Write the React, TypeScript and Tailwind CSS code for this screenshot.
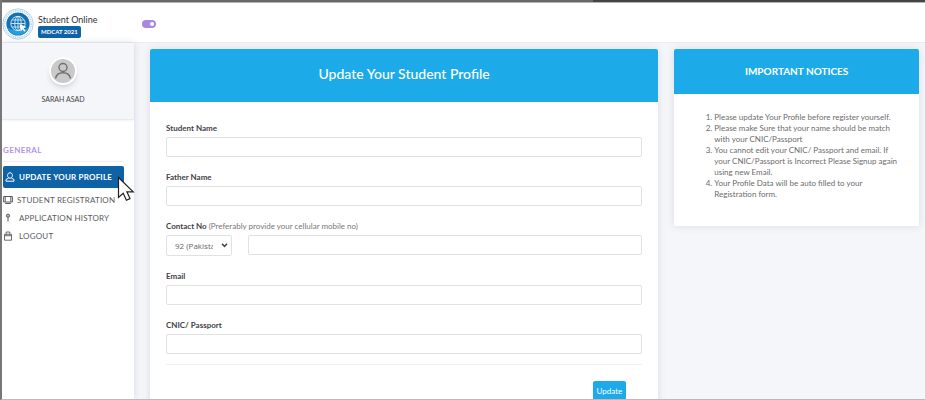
import React, { useState } from "react";

const NOTICES = [
  "Please update Your Profile before register yourself.",
  "Please make Sure that your name should be match with your CNIC/Passport",
  "You cannot edit your CNIC/ Passport and email. If your CNIC/Passport is Incorrect Please Signup again using new Email.",
  "Your Profile Data will be auto filled to your Registration form.",
];

const inputClass =
  "block w-full h-5 px-2 rounded-xs border border-[#e0e1e3] bg-white text-[8px] text-[#555555] outline-none focus:border-[#1daae9]";
const labelClass = "block text-[8px] leading-4 font-bold text-[#3f4247]";

function Logo() {
  return (
    <svg viewBox="0 0 32 32" className="size-8 shrink-0" aria-hidden="true">
      <circle cx="16" cy="16" r="15.2" fill="#ffffff" stroke="#9cc8e4" strokeWidth="0.8" />
      <circle cx="16" cy="16" r="13.3" fill="none" stroke="#b3d3e9" strokeWidth="1.6" strokeDasharray="1.1 0.8" />
      <circle cx="16" cy="16" r="11.6" fill="#1470b3" />
      <path d="M5 19a11.6 11.6 0 0 0 22 0c-6 5-16 5-22 0z" fill="#1fa3df" />
      <g fill="none" stroke="#d3ecfa" strokeWidth="0.9">
        <circle cx="16" cy="15.5" r="7.2" />
        <ellipse cx="16" cy="15.5" rx="3.2" ry="7.2" />
        <path d="M9 15.5h14M16 8.5v14M10 12h12M10 19h12" />
      </g>
      <path d="M17.5 16l7 3-2.8 1.2 1.9 2.5-1.3 1-1.9-2.5-1.5 2.200z" fill="#ffffff" />
    </svg>
  );
}

function UserIcon({ className }: { className: string }) {
  return (
    <svg viewBox="0 0 20 20" className={className} fill="none" stroke="currentColor" strokeWidth="1.4" aria-hidden="true">
      <circle cx="10" cy="6.5" r="4" />
      <path d="M2.5 17.5c.8-3.8 3.8-5.7 7.5-5.7s6.7 1.9 7.5 5.7" />
    </svg>
  );
}

function ProfileIcon() {
  return (
    <svg viewBox="0 0 10 10" className="size-2.5" fill="none" stroke="currentColor" strokeWidth="1" aria-hidden="true">
      <path d="M5 .8c1.5 0 2.4 1 2.4 2.6S6.5 6.2 5 6.2 2.6 5 2.6 3.4 3.5.8 5 .8zM3.7 6L1 7.5v1.7h8V7.5L6.3 6" />
    </svg>
  );
}

function MonitorIcon() {
  return (
    <svg viewBox="0 0 10 10" className="size-2.5" fill="none" stroke="currentColor" strokeWidth="1" aria-hidden="true">
      <path d="M.6 1.5h8.8v5.5H.6zM2.2 1.5v5.5M7.8 1.5v5.5M2.2 8.5h5.6" />
    </svg>
  );
}

function PinIcon() {
  return (
    <svg viewBox="0 0 10 10" className="size-2.5" fill="none" stroke="currentColor" strokeWidth="1" aria-hidden="true">
      <circle cx="5" cy="2.7" r="1.6" fill="#b5b7ba" />
      <path d="M5 4.300v4.200" />
    </svg>
  );
}

function BagIcon() {
  return (
    <svg viewBox="0 0 10 10" className="size-2.5" fill="none" stroke="currentColor" strokeWidth="0.9" aria-hidden="true">
      <path d="M1.500 3.300h7v5.900h-7zM3.200 3.300V1h3.600v2.300M1.500 4.700h7" />
    </svg>
  );
}

const MENU = [
  { label: "STUDENT REGISTRATION", icon: <MonitorIcon />, gap: "gap-1" },
  { label: "APPLICATION HISTORY", icon: <PinIcon />, gap: "gap-1.5" },
  { label: "LOGOUT", icon: <BagIcon />, gap: "gap-1.5" },
];

function Sidebar() {
  return (
    <aside className="relative z-10 w-[132px] shrink-0 bg-white shadow-[0_0_8px_rgba(60,70,100,0.16)]">
      <div className="flex flex-col items-center bg-[#f5f6fa] pt-3.5 pb-3.5 pr-2.5 border-b border-[#e9eaee] shadow-xs">
        <div className="size-7 rounded-full border-2 border-white bg-[#c9c9c9] text-[#707070] flex items-center justify-center shadow-md">
          <UserIcon className="size-5" />
        </div>
        <p className="mt-2 text-[7px] leading-3 text-[#444444]">SARAH ASAD</p>
      </div>

      <nav className="pt-6 pl-px">
        <h2 className="mr-2.5 pb-[5px] border-b border-[#efeff2] text-[8px] leading-3 font-bold tracking-wider text-[#b293e8]">
          GENERAL
        </h2>
        <a
          href="#profile"
          className="mt-1 mr-2.5 h-[22px] px-0.5 flex items-center gap-1 rounded-xs bg-[#0e62a6] text-white text-[8px] font-bold tracking-wide whitespace-nowrap"
        >
          <ProfileIcon />
          UPDATE YOUR PROFILE
        </a>
        <ul className="mt-[3px]">
          {MENU.map((item) => (
            <li key={item.label}>
              <a
                href="#menu"
                className={`h-[18px] flex items-center ${item.gap} text-[8px] tracking-wide whitespace-nowrap text-[#595c62]`}
              >
                {item.icon}
                {item.label}
              </a>
            </li>
          ))}
        </ul>
      </nav>

      {/* Pointer */}
      <svg viewBox="0 0 18 26" className="absolute left-[115px] top-[133px] w-[18px] h-[26px]" aria-hidden="true">
        <path d="M1.5 1.5v20l4.7-4.3 3.2 7 3.6-1.6-3.1-6.8h6.3z" fill="#ffffff" stroke="#222222" strokeWidth="1.2" />
      </svg>
    </aside>
  );
}

function Field({ id, label, type = "text" }: { id: string; label: string; type?: string }) {
  return (
    <div>
      <label htmlFor={id} className={labelClass}>
        {label}
      </label>
      <input id={id} type={type} className={`mt-px ${inputClass}`} />
    </div>
  );
}

export default function App() {
  const [menuOpen, setMenuOpen] = useState(true);
  const [code, setCode] = useState("92");

  const handleSubmit = (e: React.FormEvent) => {
    e.preventDefault();
  };

  return (
    <div className="h-screen overflow-hidden flex flex-col bg-[#f5f6fa] border-l-2 border-l-[#777777] border-b border-b-[#b9babd] font-[Lato,sans-serif]">
      {/* Window edge */}
      <div className="flex h-[3px] shrink-0 border-b border-[#b4b4b4]">
        <div className="basis-16/25 bg-[#686868]" />
        <div className="flex-1 bg-[#444444]" />
      </div>

      {/* Header */}
      <header className="h-10 pt-0.5 shrink-0 flex items-center bg-white border-b border-[#ececef]">
        <Logo />
        <div className="ml-1 mt-1 w-[104px]">
          <p className="text-[9px] leading-3 text-[#333333]">Student Online</p>
          <span className="block w-fit h-3 px-[3px] rounded-xs bg-[#0e62a6] text-[6px] leading-3 font-bold text-white">
            MDCAT 2021
          </span>
        </div>
        <button
          type="button"
          role="switch"
          aria-checked={menuOpen}
          aria-label="Sidebar"
          onClick={() => setMenuOpen(!menuOpen)}
          className={`w-3.5 h-2 p-0.5 flex items-center rounded-full bg-[#a987e3] cursor-pointer ${
            menuOpen ? "justify-end" : "justify-start"
          }`}
        >
          <span className="size-1 rounded-full bg-white" />
        </button>
      </header>

      <div className="flex flex-1 min-h-0">
        {menuOpen && <Sidebar />}

        <main className="flex-1 grid grid-cols-[27fr_13fr] items-start gap-4 pt-1.5 pl-4 pr-1.5">
          {/* Profile form */}
          <section className="bg-white rounded-xs shadow-[0_0_8px_rgba(60,70,100,0.14)]">
            <h1 className="h-[53px] flex items-center justify-center rounded-t-xs bg-[#1daae9] text-[14px] leading-4 pb-1 font-medium text-white">
              Update Your Student Profile
            </h1>
            <form onSubmit={handleSubmit} className="px-4 pt-[18px] pb-4">
              <div className="space-y-3">
                <Field id="student-name" label="Student Name" />
                <Field id="father-name" label="Father Name" />
                <div>
                  <label htmlFor="contact" className={labelClass}>
                    Contact No <span className="font-normal text-[#777777]">(Preferably provide your cellular mobile no)</span>
                  </label>
                  <div className="mt-px flex items-start gap-4">
                    <div className="relative w-[66px] shrink-0">
                      <select
                        aria-label="Country code"
                        value={code}
                        onChange={(e) => setCode(e.target.value)}
                        className="block w-full h-[21px] pl-2 pr-[18px] appearance-none rounded-xs border border-[#e0e1e3] bg-white font-['Open_Sans',sans-serif] text-[8px] text-[#666666] outline-none"
                      >
                        <option value="92">92 (Pakistan)</option>
                        <option value="93">93 (Afghanistan)</option>
                      </select>
                      <svg
                        viewBox="0 0 8 6"
                        className="absolute right-1 top-2 w-[7px] h-[5px] pointer-events-none"
                        fill="none"
                        stroke="#444444"
                        strokeWidth="1.8"
                        aria-hidden="true"
                      >
                        <path d="M1 1l3 3 3-3" />
                      </svg>
                    </div>
                    <input id="contact" type="tel" className={inputClass} />
                  </div>
                </div>
                <Field id="email" label="Email" type="email" />
                <Field id="cnic" label="CNIC/ Passport" />
              </div>
              <hr className="mt-2.5 border-[#efeff1]" />
              <div className="mt-4 pr-4 flex justify-end">
                <button type="submit" className="h-5 px-1 rounded-xs bg-[#1daae9] text-[8px] text-white cursor-pointer">
                  Update
                </button>
              </div>
            </form>
          </section>

          {/* Notices */}
          <section className="bg-white rounded-xs shadow-[0_0_8px_rgba(60,70,100,0.14)]">
            <h2 className="h-[45px] flex items-center justify-center rounded-t-xs bg-[#1daae9] text-[10px] font-bold text-white">
              IMPORTANT NOTICES
            </h2>
            <ol className="list-decimal pl-10 pr-[18px] pt-[18px] pb-[26px] text-[8px] leading-[11px] text-[#6c6c6c]">
              {NOTICES.map((notice) => (
                <li key={notice}>{notice}</li>
              ))}
            </ol>
          </section>
        </main>
      </div>
    </div>
  );
}
